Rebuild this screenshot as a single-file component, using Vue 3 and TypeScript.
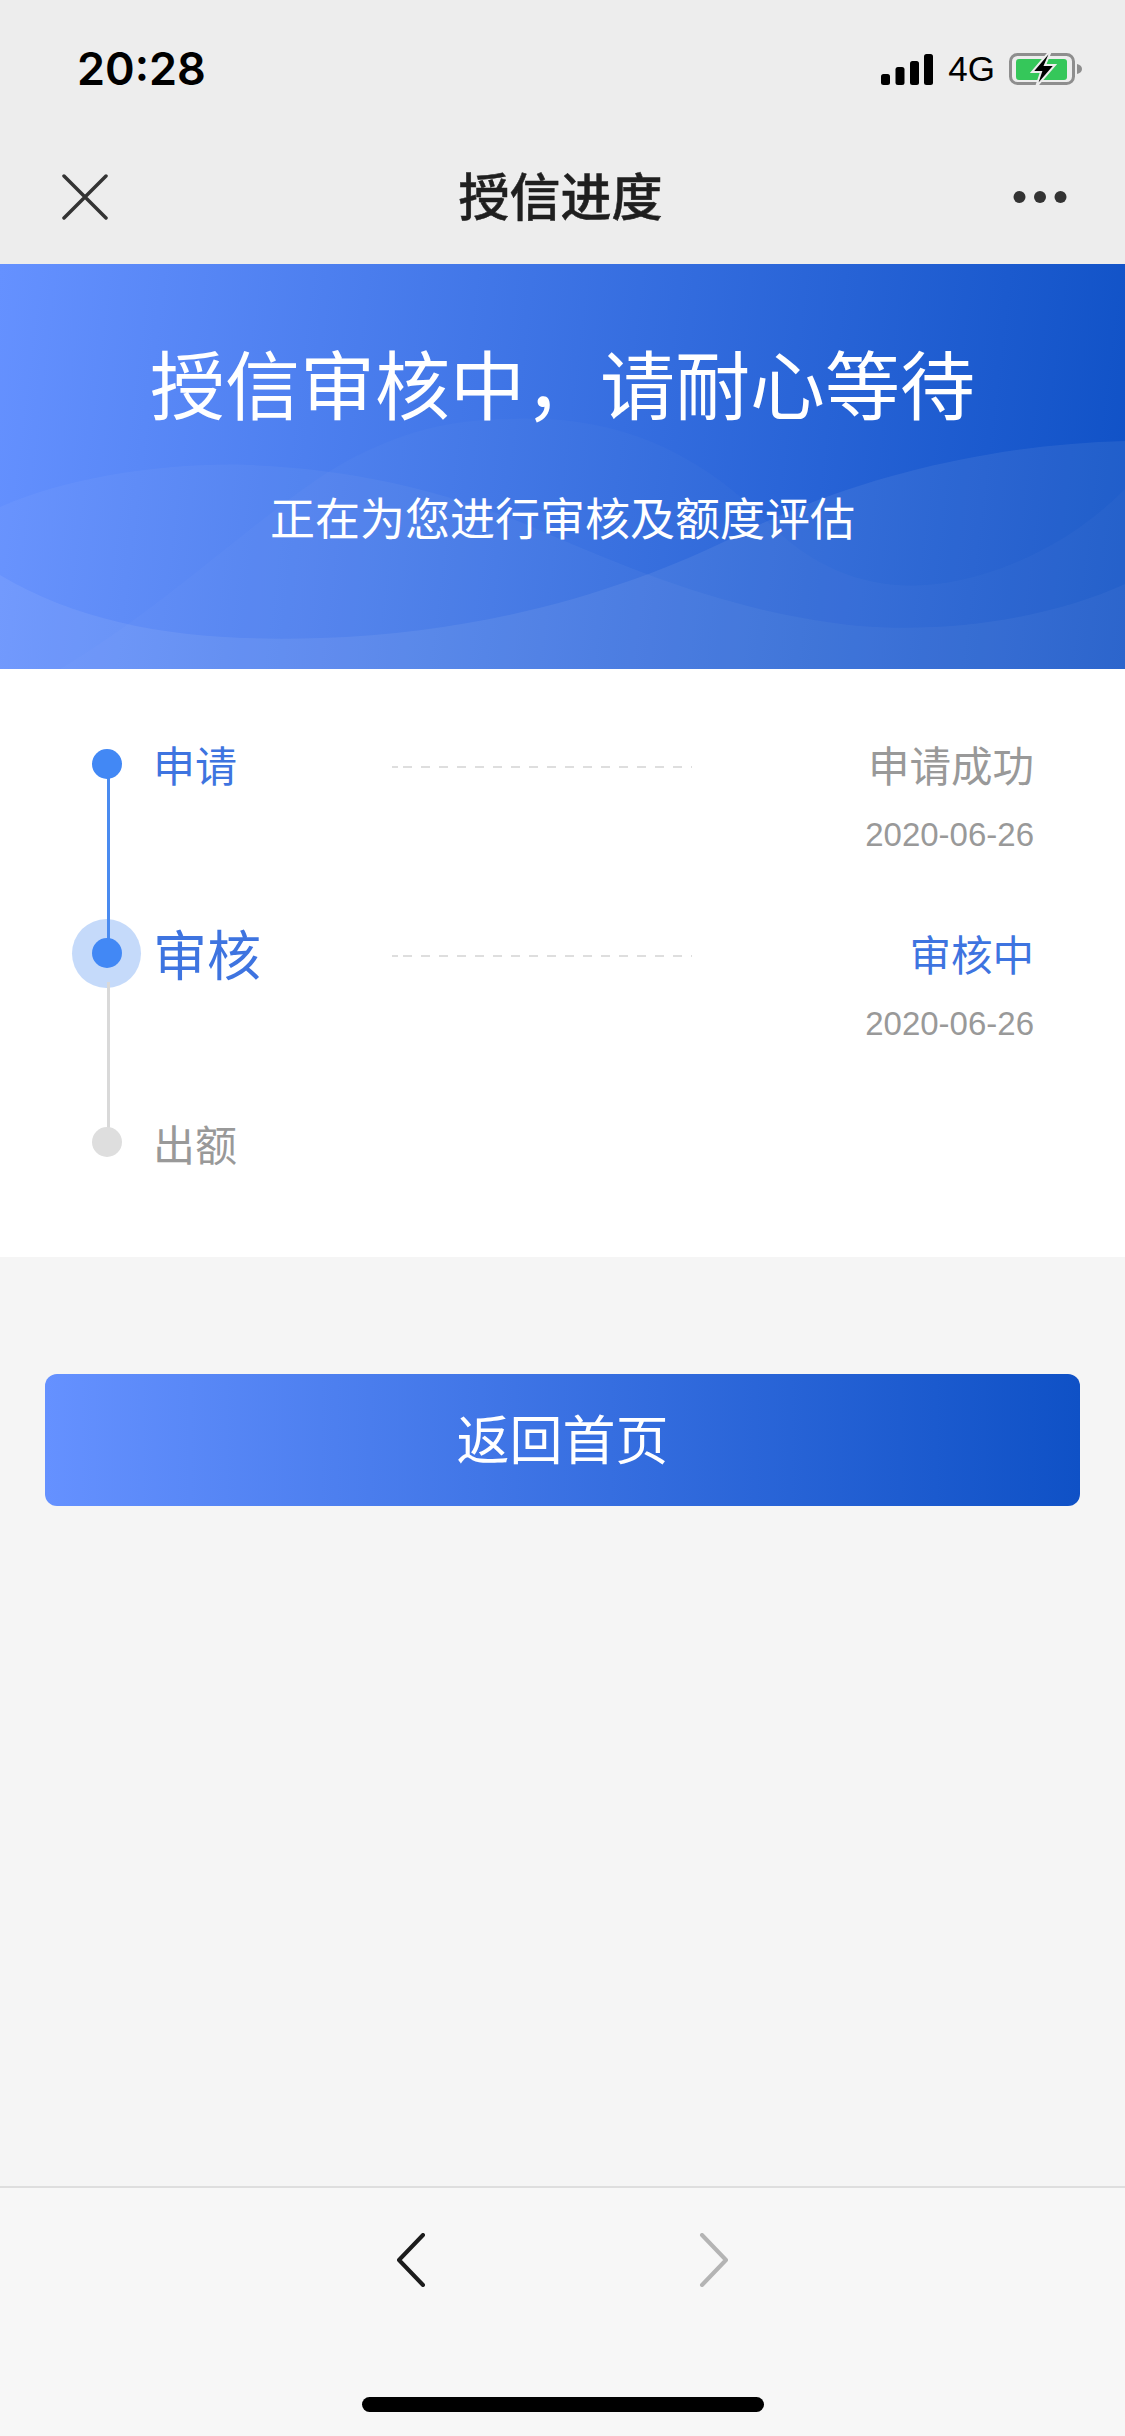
<script setup lang="ts">
interface Step {
  name: string
  status?: string
  date?: string
  state: 'done' | 'active' | 'todo'
}

const steps: Step[] = [
  { name: '申请', status: '申请成功', date: '2020-06-26', state: 'done' },
  { name: '审核', status: '审核中', date: '2020-06-26', state: 'active' },
  { name: '出额', state: 'todo' },
]
</script>

<template>
  <div class="page">
    <div class="top-bar">
      <div class="status-bar">
        <span class="time">20:28</span>
        <div class="status-right">
          <svg class="signal" width="52" height="32" viewBox="0 0 52 32">
            <rect x="0" y="20" width="9" height="11" rx="2.5" />
            <rect x="14.5" y="13" width="9" height="18" rx="2.5" />
            <rect x="29" y="7" width="9" height="24" rx="2.5" />
            <rect x="43" y="0" width="9" height="31" rx="2.5" />
          </svg>
          <span class="network">4G</span>
          <svg class="battery" width="74" height="36" viewBox="0 0 74 36">
            <rect x="1.5" y="3.5" width="63" height="29" rx="7" fill="none" stroke="#8e8e8e" stroke-width="3" />
            <rect x="7" y="8" width="51" height="21" rx="3" fill="#35c75a" />
            <path d="M68 13c3 .5 5 2.500 5 5s-2 4.500-5 5z" fill="#8e8e8e" />
            <path d="M41 0L23 21h9l-5 15 19-22h-10l6-14z" fill="#000" stroke="#ededed" stroke-width="2" />
          </svg>
        </div>
      </div>
      <div class="nav-bar">
        <svg class="close" width="46" height="46" viewBox="0 0 46 46">
          <path d="M2 2l42 42M44 2L2 44" fill="none" stroke="#333" stroke-width="3.500" stroke-linecap="round" />
        </svg>
        <span class="nav-title">授信进度</span>
        <svg class="more" width="54" height="14" viewBox="0 0 54 14">
          <circle cx="6.500" cy="7" r="6" />
          <circle cx="27" cy="7" r="6" />
          <circle cx="47.500" cy="7" r="6" />
        </svg>
      </div>
    </div>

    <section class="hero">
      <svg class="waves" width="1125" height="405" viewBox="0 0 1125 405" preserveAspectRatio="none">
        <path d="M0 243C70 212 170 198 250 201C350 205 440 225 530 262C640 310 740 350 860 362C960 370 1060 350 1125 320V405H0Z" />
        <path class="wave-faint" d="M60 405C170 340 270 240 345 198C400 168 450 155 510 155C620 150 700 190 770 260C820 310 880 330 950 318C1020 305 1080 270 1125 225V405Z" />
        <path class="wave-strong" d="M0 311C90 365 200 378 320 374C500 368 640 320 740 270C860 210 1000 180 1125 177V405H0Z" />
      </svg>
      <h1 class="hero-title">授信审核中，请耐心等待</h1>
      <p class="hero-sub">正在为您进行审核及额度评估</p>
    </section>

    <section class="steps">
      <div v-for="step in steps" :key="step.name" class="step" :class="step.state">
        <div class="marker"><i class="dot"></i></div>
        <div class="name">{{ step.name }}</div>
        <template v-if="step.status">
          <div class="dash"></div>
          <div class="info">
            <div class="status">{{ step.status }}</div>
            <div class="date">{{ step.date }}</div>
          </div>
        </template>
      </div>
    </section>

    <div class="action">
      <button class="home-btn" type="button"><span>返回首页</span></button>
    </div>

    <div class="bottom-bar">
      <div class="arrows">
        <svg width="30" height="54" viewBox="0 0 30 54">
          <path d="M27 2L3 27l24 25" fill="none" stroke="#1c1c1c" stroke-width="4" stroke-linecap="round" stroke-linejoin="round" />
        </svg>
        <svg width="30" height="54" viewBox="0 0 30 54">
          <path d="M3 2l24 25L3 52" fill="none" stroke="#b4b4b4" stroke-width="4" stroke-linecap="round" stroke-linejoin="round" />
        </svg>
      </div>
      <div class="home-indicator"></div>
    </div>
  </div>
</template>

<style>
html,
body {
  margin: 0;
  background: #f5f5f5;
}
</style>

<style scoped>
.page {
  width: 1125px;
  height: 2436px;
  display: flex;
  flex-direction: column;
  background: #f5f5f5;
  font-family: 'Liberation Sans', 'Noto Sans CJK SC', sans-serif;
  overflow: hidden;
}

.top-bar {
  height: 264px;
  background: #ededed;
  display: flex;
  flex-direction: column;
  flex-shrink: 0;
}

.status-bar {
  height: 130px;
  padding: 6px 42px 0 77px;
  box-sizing: border-box;
  display: flex;
  align-items: center;
  justify-content: space-between;
}

.time {
  font-family: Inter, 'Liberation Sans', sans-serif;
  font-size: 45px;
  font-weight: 600;
  color: #000;
}

.status-right {
  display: flex;
  align-items: center;
}

.signal {
  fill: #000;
  margin-top: 4px;
}

.network {
  font-size: 35px;
  color: #000;
  margin: 2px 14px 0 15px;
}

.battery {
  margin-top: 2px;
}

.nav-bar {
  flex: 1;
  padding: 0 58px 0 62px;
  display: flex;
  align-items: center;
  justify-content: space-between;
}

.nav-title {
  font-size: 51px;
  font-weight: 500;
  color: #1f1f1f;
  font-family: 'Noto Sans CJK SC', sans-serif;
  margin-bottom: 6px;
  -webkit-text-stroke: 0.5px #1f1f1f;
}

.more {
  fill: #333;
}

.hero {
  position: relative;
  height: 405px;
  flex-shrink: 0;
  background: linear-gradient(97deg, #6591ff 0%, #0f51c6 100%);
  color: #fff;
  text-align: center;
  font-family: 'Noto Sans CJK SC', sans-serif;
  overflow: hidden;
}

.waves {
  position: absolute;
  left: 0;
  top: 0;
  fill: #fff;
  fill-opacity: 0.04;
}

.wave-faint {
  fill-opacity: 0.025;
}

.wave-strong {
  fill-opacity: 0.07;
}

.hero-title {
  position: relative;
  margin: 0;
  padding-top: 61px;
  font-size: 75px;
  line-height: 114px;
  font-weight: 400;
}

.hero-sub {
  position: relative;
  margin: 0;
  padding-top: 46px;
  font-size: 45px;
  line-height: 64px;
}

.steps {
  height: 588px;
  flex-shrink: 0;
  padding: 68px 91px 0 92px;
  box-sizing: border-box;
  background: #fff;
  font-family: 'Noto Sans CJK SC', sans-serif;
}

.step {
  position: relative;
  height: 189px;
  display: flex;
  align-items: flex-start;
}

.step:not(:last-child)::before {
  content: '';
  position: absolute;
  z-index: 1;
  left: 14.500px;
  top: 27px;
  width: 3px;
  height: 189px;
  background: #4a8bf0;
}

.step.active:not(:last-child)::before {
  background: #d9d9d9;
  top: 56px;
  height: 160px;
}

.marker {
  position: relative;
  width: 30px;
  height: 30px;
  margin-top: 12px;
  flex-shrink: 0;
}

.dot {
  position: absolute;
  z-index: 2;
  left: 0;
  top: 0;
  width: 30px;
  height: 30px;
  border-radius: 50%;
  background: #4288f5;
}

.active .marker::before {
  content: '';
  position: absolute;
  z-index: 0;
  left: -20px;
  top: -19.500px;
  width: 69px;
  height: 69px;
  border-radius: 50%;
  background: #c5dafa;
}

.todo .dot {
  background: #dedede;
}

.name {
  margin-left: 31px;
  width: 239px;
  flex-shrink: 0;
  font-size: 42px;
  line-height: 54px;
  color: #3e74e0;
}

.active .name {
  font-size: 54px;
}

.todo .name {
  color: #999;
  padding-top: 1px;
}

.dash {
  width: 300px;
  height: 2px;
  flex-shrink: 0;
  margin-top: 29px;
  background:
    linear-gradient(#dedede, #dedede) 0 0 / 6px 2px no-repeat,
    linear-gradient(90deg, #dedede 9px, transparent 9px) 11px 0 / 18px 2px repeat-x;
}

.info {
  flex: 1;
  text-align: right;
}

.status {
  font-size: 41.5px;
  line-height: 54px;
  color: #999;
}

.active .status {
  color: #3e74e0;
}

.date {
  margin-top: 24px;
  font-family: 'Liberation Sans', sans-serif;
  font-size: 33px;
  line-height: 40px;
  color: #999;
}

.action {
  padding: 117px 45px 0;
  flex-shrink: 0;
}

.home-btn {
  display: block;
  width: 100%;
  height: 132px;
  padding: 0 0 6px;
  border: none;
  border-radius: 12px;
  background: linear-gradient(90deg, #6591ff 0%, #0f51c6 100%);
  color: #fff;
  font-family: 'Noto Sans CJK SC', sans-serif;
  font-size: 53px;
}

.bottom-bar {
  margin-top: auto;
  height: 250px;
  box-sizing: border-box;
  flex-shrink: 0;
  border-top: 2px solid #dedede;
  background: #f7f7f7;
  position: relative;
}

.arrows {
  display: flex;
  justify-content: center;
  gap: 273px;
  padding: 45px 0 0 0;
}

.home-indicator {
  position: absolute;
  left: 362px;
  bottom: 24px;
  width: 402px;
  height: 15px;
  border-radius: 8px;
  background: #000;
}
</style>
